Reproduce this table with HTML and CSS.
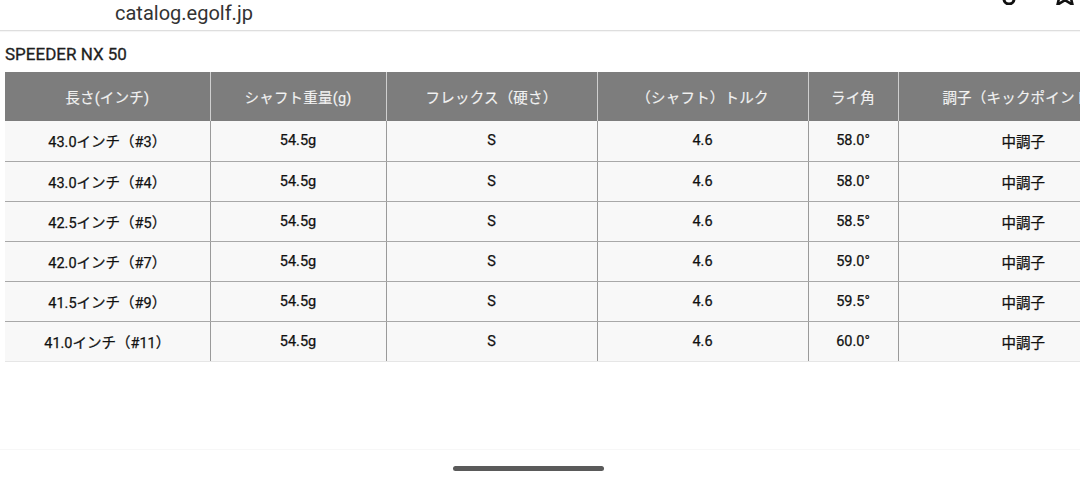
FILE: index.html
```html
<!DOCTYPE html>
<html lang="ja">
<head>
<meta charset="utf-8">
<link rel="stylesheet" href="styles.css">
</head>
<body>
<div class="screen">
  <header class="topbar">
    <span class="url">catalog.egolf.jp</span>
    <div class="icons">
      <svg class="ic ic-share" width="20" height="24" viewBox="0 0 20 24"><path d="M5 14v4a5 5 0 0 0 10 0v-4" fill="none" stroke="#111" stroke-width="3"/></svg>
      <svg class="ic ic-star" width="26" height="24" viewBox="0 0 26 24"><path d="M13 1l3.5 8 8.5.7-6.5 5.6 2 8.4L13 19.2 5.5 23.7l2-8.4L1 9.7l8.5-.7z" fill="none" stroke="#111" stroke-width="2.6" stroke-linejoin="round"/></svg>
    </div>
  </header>
  <main class="content">
    <h1 class="title">SPEEDER NX 50</h1>
    <table class="spec">
      <colgroup>
        <col class="c1"><col class="c2"><col class="c3"><col class="c4"><col class="c5"><col class="c6">
      </colgroup>
      <thead>
        <tr>
          <th>長さ(インチ)</th>
          <th>シャフト重量(g)</th>
          <th>フレックス（硬さ）</th>
          <th>（シャフト）トルク</th>
          <th>ライ角</th>
          <th>調子（キックポイント）</th>
        </tr>
      </thead>
      <tbody>
        <tr><td>43.0インチ（#3）</td><td>54.5g</td><td>S</td><td>4.6</td><td>58.0°</td><td>中調子</td></tr>
        <tr><td>43.0インチ（#4）</td><td>54.5g</td><td>S</td><td>4.6</td><td>58.0°</td><td>中調子</td></tr>
        <tr><td>42.5インチ（#5）</td><td>54.5g</td><td>S</td><td>4.6</td><td>58.5°</td><td>中調子</td></tr>
        <tr><td>42.0インチ（#7）</td><td>54.5g</td><td>S</td><td>4.6</td><td>59.0°</td><td>中調子</td></tr>
        <tr><td>41.5インチ（#9）</td><td>54.5g</td><td>S</td><td>4.6</td><td>59.5°</td><td>中調子</td></tr>
        <tr><td>41.0インチ（#11）</td><td>54.5g</td><td>S</td><td>4.6</td><td>60.0°</td><td>中調子</td></tr>
      </tbody>
    </table>
  </main>
  <footer class="navbar"><span class="home"></span></footer>
</div>
</body>
</html>
```
FILE: styles.css
```css
* { box-sizing: border-box; }
html, body {
  margin: 0;
  padding: 0;
  width: 1080px;
  height: 486px;
  overflow: hidden;
  background: #fff;
  font-family: Roboto, "Noto Sans CJK JP", sans-serif;
}
.screen {
  width: 1080px;
  height: 486px;
  display: flex;
  flex-direction: column;
  overflow: hidden;
}
.topbar {
  height: 31px;
  flex: none;
  display: flex;
  align-items: flex-start;
  border-bottom: 1px solid #dedede;
  box-shadow: 0 1px 1px rgba(0,0,0,0.04);
  padding-left: 115px;
  overflow: hidden;
}
.url {
  font-size: 20px;
  line-height: 26px;
  color: #333;
}
.icons {
  margin-left: auto;
  display: flex;
  gap: 33px;
  margin-top: -19px;
  padding-right: 2px;
}
.ic { display: block; }
.content {
  flex: 1;
  padding: 0 0 0 5px;
  overflow: hidden;
}
.title {
  margin: 0;
  height: 41px;
  font-size: 17px;
  font-weight: 400;
  color: #1e1e1e;
  line-height: 47px;
  -webkit-text-stroke: 0.3px #1e1e1e;
}
.spec {
  border-collapse: collapse;
  table-layout: fixed;
  width: 1143px;
}
.c1 { width: 205px; }
.c2 { width: 176px; }
.c3 { width: 211px; }
.c4 { width: 211px; }
.c5 { width: 90px; }
.c6 { width: 250px; }
.spec th {
  background: #7d7d7d;
  color: #f2f2f2;
  font-weight: 400;
  font-size: 14.5px;
  height: 49px;
  padding: 0;
  white-space: nowrap;
  border-left: 1px solid #cfcfcf;
  text-align: center;
  letter-spacing: 0.2px;
  -webkit-text-stroke: 0.15px #f2f2f2;
}
.spec th:first-child { border-left: none; }
.spec td {
  background: #f8f8f8;
  color: #111;
  font-weight: 400;
  font-size: 14.5px;
  height: 40px;
  padding: 0;
  text-align: center;
  white-space: nowrap;
  border-left: 1px solid #9a9a9a;
  border-bottom: 1px solid #a8a8a8;
  -webkit-text-stroke: 0.25px #111;
}
.spec td:first-child { border-left: none; }
.spec tbody tr:last-child td { border-bottom: 1px solid #e6e6e6; }
.navbar {
  height: 37px;
  flex: none;
  display: flex;
  justify-content: center;
  align-items: flex-start;
  border-top: 1px solid #f7f7f7;
  padding-top: 16px;
}
.home {
  display: block;
  width: 151px;
  height: 5px;
  border-radius: 3px;
  background: #5a5a5a;
  margin-left: -23px;
}
```
